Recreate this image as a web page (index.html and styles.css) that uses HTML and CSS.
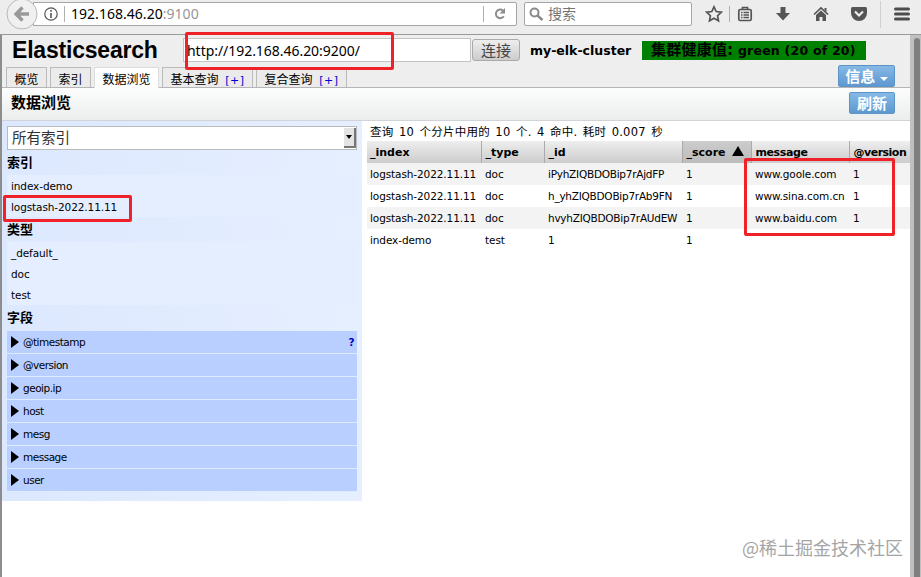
FILE: index.html
```html
<!DOCTYPE html>
<html lang="zh-CN">
<head>
    <meta charset="UTF-8">
    <title>Elasticsearch</title>
    <link rel="stylesheet" href="styles.css">
</head>
<body>
    <!-- Browser toolbar -->
    <div class="toolbar">
        <div class="back">
            <svg width="32" height="32" viewBox="0 0 32 32"><circle cx="16" cy="16" r="15" fill="#f0f0f0" stroke="#b9b9b9"/><path d="M23 16H11M16.500 9.500L10 16l6.500 6.500" fill="none" stroke="#999" stroke-width="3.400"/></svg>
        </div>
        <div class="url-bar">
            <svg class="info-icon" width="14" height="14" viewBox="0 0 14 14"><circle cx="7" cy="7" r="6.200" fill="none" stroke="#555" stroke-width="1.200"/><path d="M7 6v5M7 3v1.700" stroke="#555" stroke-width="1.600"/></svg>
            <span class="divider"></span>
            <span class="address">192.168.46.20<span class="port">:9100</span></span>
            <span class="divider reload-divider"></span>
            <svg class="reload" width="14" height="14" viewBox="0 0 14 14"><path d="M9.800 3.400A4.300 4.300 0 1 0 10.800 9.200" fill="none" stroke="#8c8c8c" stroke-width="2"/><path d="M12 1v5.500H6.500z" fill="#8c8c8c"/></svg>
        </div>
        <div class="search-bar">
            <svg width="15" height="15" viewBox="0 0 15 15"><circle cx="5.500" cy="5.500" r="4" fill="none" stroke="#8a8a8a" stroke-width="2"/><path d="M8.500 8.500l5 4.500" stroke="#8a8a8a" stroke-width="2.400"/></svg>
            <span>搜索</span>
        </div>
        <div class="tools">
            <svg width="18" height="18" viewBox="0 0 18 18"><path d="M9 1.800l2.200 4.700 5.100.7-3.700 3.500.9 5.100L9 13.300l-4.500 2.500.9-5.100-3.700-3.500 5.100-.7z" fill="none" stroke="#555" stroke-width="1.700"/></svg>
            <span class="divider star-divider"></span>
            <svg width="16" height="16" viewBox="0 0 16 16"><path d="M5.500 3.500V1.500h5v2" fill="none" stroke="#555" stroke-width="1.600"/><rect x="1.800" y="3.500" width="12.400" height="11" rx="1.500" fill="none" stroke="#555" stroke-width="1.700"/><path d="M4 6.500h1.500M6.500 6.500H12M4 9h1.500M6.500 9H12M4 11.500h1.500M6.500 11.500H12" stroke="#555" stroke-width="1.300"/></svg>
            <svg width="16" height="16" viewBox="0 0 16 16"><path d="M5.500 1h5v6H15l-7 7.500L1 7h4.500z" fill="#555"/></svg>
            <svg width="16" height="16" viewBox="0 0 16 16"><path d="M1 8.500l7-6.500 7 6.500" fill="none" stroke="#555" stroke-width="1.700"/><path d="M11.500 2h2v4l-2-2zM3 9l5-4.500L13 9v6H9.500v-4h-3v4H3z" fill="#555"/></svg>
            <svg width="16" height="16" viewBox="0 0 16 16"><path d="M1.500 1h13Q16 1 16 2.500V7a8 8 0 0 1-16 0V2.500Q0 1 1.500 1z" fill="#555"/><path d="M4 5.500l4 4 4-4" fill="none" stroke="#eee" stroke-width="2.200"/></svg>
            <span class="divider menu-divider"></span>
            <svg width="16" height="14" viewBox="0 0 16 14"><path d="M1.500 2h13M1.500 7h13M1.500 12h13" stroke="#4d4d4d" stroke-width="3" stroke-linecap="round"/></svg>
        </div>
    </div>

    <div class="viewport">
        <div class="page">
            <!-- Cluster connection -->
            <div class="header">
                <h1>Elasticsearch</h1>
                <input class="connect-url" type="text" value="http://192.168.46.20:9200/">
                <button class="connect">连接</button>
                <span class="cluster-name">my-elk-cluster</span>
                <span class="health"><span class="health-zh">集群健康值:</span> green (20 of 20)</span>
            </div>

            <div class="nav">
                <div class="tab tab-short">概览</div>
                <div class="tab tab-short">索引</div>
                <div class="tab tab-browse active">数据浏览</div>
                <div class="tab tab-query">基本查询 <a>[+]</a></div>
                <div class="tab tab-query">复合查询 <a>[+]</a></div>
                <div class="blue-button info">信息 <i class="caret"></i></div>
            </div>

            <div class="title-bar">
                <h2>数据浏览</h2>
                <div class="blue-button refresh">刷新</div>
            </div>

            <div class="content">
                <!-- Filters -->
                <div class="sidebar">
                    <div class="select"><span>所有索引</span><i class="select-arrow"></i></div>
                    <h3>索引</h3>
                    <ul class="options">
                        <li>index-demo</li>
                        <li>logstash-2022.11.11</li>
                    </ul>
                    <h3>类型</h3>
                    <ul class="options">
                        <li>_default_</li>
                        <li>doc</li>
                        <li>test</li>
                    </ul>
                    <h3>字段</h3>
                    <ul class="fields">
                        <li>@timestamp<b>?</b></li>
                        <li>@version</li>
                        <li>geoip.ip</li>
                        <li>host</li>
                        <li>mesg</li>
                        <li>message</li>
                        <li>user</li>
                    </ul>
                </div>

                <!-- Results -->
                <div class="results">
                    <div class="summary">查询 10 个分片中用的 10 个. 4 命中. 耗时 0.007 秒</div>
                    <table>
                        <colgroup>
                            <col class="col-index"><col class="col-type"><col class="col-id">
                            <col class="col-score"><col class="col-message"><col class="col-version">
                        </colgroup>
                        <tr><th>_index</th><th>_type</th><th>_id</th><th class="sorted">_score <i class="sort-arrow"></i></th><th>message</th><th>@version</th></tr>
                        <tr class="odd"><td>logstash-2022.11.11</td><td>doc</td><td>iPyhZIQBDOBip7rAjdFP</td><td>1</td><td>www.goole.com</td><td>1</td></tr>
                        <tr><td>logstash-2022.11.11</td><td>doc</td><td>h_yhZIQBDOBip7rAb9FN</td><td>1</td><td>www.sina.com.cn</td><td>1</td></tr>
                        <tr class="odd"><td>logstash-2022.11.11</td><td>doc</td><td>hvyhZIQBDOBip7rAUdEW</td><td>1</td><td>www.baidu.com</td><td>1</td></tr>
                        <tr><td>index-demo</td><td>test</td><td>1</td><td>1</td><td></td><td></td></tr>
                    </table>
                </div>
            </div>
        </div>
        <div class="scrollbar"><div class="thumb"></div></div>
    </div>

    <!-- Annotations over the page -->
    <div class="mark mark-url"></div>
    <div class="mark mark-index"></div>
    <div class="mark mark-message"></div>
    <div class="watermark">@稀土掘金技术社区</div>
</body>
</html>
```
FILE: styles.css
```css
* {
    box-sizing: border-box;
}

body {
    position: relative;
    margin: 0;
    width: 921px;
    height: 577px;
    overflow: hidden;
    background: #fff;
    color: #000;
    font-family: "DejaVu Sans", "Noto Sans CJK SC", sans-serif;
    font-size: 10px;
}

h1, h2, h3, ul {
    margin: 0;
    padding: 0;
}

svg {
    display: block;
    flex: none;
}

/* browser toolbar */
.toolbar {
    display: flex;
    align-items: flex-start;
    height: 35px;
    padding-left: 6px;
    background: #ededed;
    border-bottom: 1px solid #999;
}

.back {
    width: 32px;
    margin-top: -2px;
    z-index: 1;
}

.url-bar, .search-bar {
    display: flex;
    align-items: center;
    height: 24px;
    margin-top: 2px;
    background: #fff;
    border: 1px solid #a6a6a6;
    border-radius: 0 2px 2px 0;
}

.url-bar {
    width: 484px;
    margin-left: -5px;
    padding-left: 10px;
}

.divider {
    width: 1px;
    height: 16px;
    background: #b0b0b0;
}

.url-bar .divider {
    margin-left: 6px;
}

.address {
    margin-left: 6px;
    padding-bottom: 2px;
    font-family: "Noto Sans", sans-serif;
    font-size: 14px;
    letter-spacing: 0.03px;
}

.port {
    color: #969696;
}

.url-bar .reload-divider {
    margin-left: auto;
}

.reload {
    margin: 0 9px;
}

.search-bar {
    width: 168px;
    margin-left: 7px;
    padding-left: 4px;
    border-radius: 2px;
    color: #757575;
    font: 14px "Noto Sans CJK SC", sans-serif;
}

.search-bar span {
    margin-left: 4px;
    padding-bottom: 3px;
}

.tools {
    display: flex;
    align-items: center;
    flex: 1;
    height: 28px;
    padding: 0 11px 0 13px;
    gap: 22px;
}

.tools .star-divider {
    margin: 0 -15px 0 -16px;
}

.tools .menu-divider {
    height: 27px;
    margin: 0 -9px 0 -9px;
    background: #d0d0d0;
}

/* page frame */
.viewport {
    display: flex;
    height: 542px;
    border-left: 2px solid #8d8d8d;
}

.page {
    width: 908px;
    overflow: hidden;
}

.scrollbar {
    width: 11px;
    padding: 3px 1px 0 4px;
    background: #bfc0bf;
}

.thumb {
    height: 100%;
    background: #7d807d;
    border-radius: 3px 3px 0 0;
}

.header {
    display: flex;
    align-items: center;
    height: 32px;
    padding: 0 0 2px 10px;
    background: #eee;
}

h1 {
    width: 171px;
    font: bold 23px/30px "Liberation Sans", sans-serif;
    letter-spacing: -0.2px;
}

.connect-url {
    width: 288px;
    height: 24px;
    margin: 0;
    padding: 0 0 0 3px;
    border: 1px solid #c4c4c4;
    font: 14px "Noto Sans", sans-serif;
    letter-spacing: -0.04px;
}

.connect {
    width: 48px;
    height: 22px;
    margin-left: 1px;
    padding: 0;
    border: 1px solid #aaa;
    border-radius: 3px;
    background: linear-gradient(#eee, #ccc);
    color: #444;
    font: 15px/18px "Noto Sans CJK SC", sans-serif;
}

.cluster-name {
    width: 112px;
    margin-left: 10px;
    font: bold 12.5px "DejaVu Sans", sans-serif;
    white-space: nowrap;
}

.health {
    width: 224px;
    height: 19px;
    padding-left: 9px;
    background: #008000;
    font: bold 12.5px/19px "DejaVu Sans", "Noto Sans CJK SC", sans-serif;
    letter-spacing: 0.22px;
    white-space: nowrap;
}

.health-zh {
    font-size: 15px;
}

.nav {
    display: flex;
    height: 21px;
    padding-left: 4px;
    gap: 3px;
    background: #eee;
    border-bottom: 1px solid #b5b5b5;
}

.tab {
    height: 20px;
    border: 1px solid #bbb;
    border-bottom: 0;
    background: #ebebeb;
    font-size: 12px;
    line-height: 24px;
    text-align: center;
    white-space: nowrap;
}

.tab a {
    margin-left: 3px;
    color: #00c;
    font-size: 11px;
    letter-spacing: 0.5px;
}

.tab-short {
    width: 41px;
}

.tab-browse {
    width: 65px;
}

.tab-query {
    width: 91px;
}

.tab.active {
    height: 21px;
    background: #fff;
    border-color: #ddd;
}

.blue-button {
    height: 22px;
    border: 1px solid #5d94c8;
    border-radius: 2px;
    background: linear-gradient(#86b9e6, #5d98d0);
    color: #fff;
    font: bold 15px/20px "Noto Sans CJK SC", sans-serif;
    text-align: center;
}

.info {
    width: 57px;
    margin: -2px 15px 0 auto;
}

.caret {
    display: inline-block;
    margin-left: 1px;
    border: 4px solid transparent;
    border-top-color: #fff;
    border-bottom: 0;
    vertical-align: 1px;
}

.title-bar {
    display: flex;
    justify-content: space-between;
    height: 33px;
    padding: 4px 15px 0 9px;
    background: linear-gradient(#fdfdfd, #ebeeee);
    border-bottom: 1px solid #d0d4d8;
}

h2 {
    font: bold 15px/20px "Noto Sans CJK SC", sans-serif;
}

.refresh {
    width: 46px;
}

.content {
    display: flex;
}

/* filters */
.sidebar {
    width: 360px;
    height: 380px;
    padding: 5px 5px 0;
    background: linear-gradient(90deg, #dce8fe, #e6efff);
}

.select {
    display: flex;
    justify-content: space-between;
    height: 24px;
    padding: 1px 0 1px 4px;
    background: #fff;
    border: 1px solid #bbb;
    color: #333;
    font: 14.5px/18px "Noto Sans CJK SC", sans-serif;
}

.select-arrow {
    display: flex;
    align-items: center;
    width: 12px;
    padding-left: 2px;
    background: #e4e4e4;
    border-right: 2px solid #777;
    border-bottom: 2px solid #777;
}

.select-arrow::before {
    content: "";
    border: 3px solid transparent;
    border-top: 4px solid #000;
    border-bottom: 0;
}

h3 {
    height: 25px;
    font: bold 13px/23px "Noto Sans CJK SC", sans-serif;
}

ul {
    list-style: none;
}

.options {
    background: #e5eeff;
}

.options li {
    height: 21px;
    padding-left: 4px;
    font-size: 10.5px;
    line-height: 23px;
    letter-spacing: -0.1px;
}

.fields {
    padding-top: 1px;
}

.fields li {
    display: flex;
    align-items: center;
    height: 23px;
    padding: 0 3px 0 4px;
    background: #b8cfff;
    border-bottom: 1px solid #dfecff;
    font-size: 10.5px;
    letter-spacing: -0.5px;
}

.fields li::before {
    content: "";
    margin-right: 4px;
    border: 6px solid transparent;
    border-left: 8px solid #000;
    border-right: 0;
}

.fields b {
    margin-left: auto;
    color: #00c;
}

/* results */
.results {
    width: 543px;
    margin-left: 5px;
}

.summary {
    height: 20px;
    padding-left: 3px;
    font-size: 11.5px;
    line-height: 22px;
    letter-spacing: 0.25px;
    word-spacing: 1.5px;
    white-space: nowrap;
}

table {
    width: 543px;
    table-layout: fixed;
    border-collapse: collapse;
}

.col-index { width: 114px; }
.col-type { width: 63px; }
.col-id { width: 138px; }
.col-score { width: 69px; }
.col-message { width: 98px; }
.col-version { width: 61px; }

th, td {
    height: 22px;
    padding: 0 0 0 4px;
    text-align: left;
    white-space: nowrap;
}

th:first-child, td:first-child {
    padding-left: 3px;
}

td {
    font-size: 10.5px;
    letter-spacing: -0.1px;
}

td:nth-child(3) {
    letter-spacing: -0.25px;
}

th {
    background: linear-gradient(#eee, #ccc);
    border-right: 1px solid #aaa;
    font-size: 11px;
}

th:last-child {
    border-right: 0;
    letter-spacing: -0.5px;
}

.message, th:nth-child(5) {
    letter-spacing: -0.4px;
}

.sorted {
    background: linear-gradient(#ccc, #bbb);
}

.sort-arrow {
    display: inline-block;
    margin-left: 3px;
    border: 6px solid transparent;
    border-top: 0;
    border-bottom: 10px solid #000;
}

.odd td {
    background: #f3f3f3;
}

/* annotations */
.mark {
    position: absolute;
    border: 3px solid #ee2228;
    border-radius: 2px;
}

.mark-url {
    left: 185px;
    top: 32px;
    width: 209px;
    height: 38px;
}

.mark-index {
    left: 3px;
    top: 195px;
    width: 129px;
    height: 27px;
}

.mark-message {
    left: 744px;
    top: 158px;
    width: 151px;
    height: 78px;
}

.watermark {
    position: absolute;
    left: 742px;
    top: 534px;
    color: #a5a5a5;
    font: 18px/26px "Noto Sans CJK SC", sans-serif;
    white-space: nowrap;
}
```
